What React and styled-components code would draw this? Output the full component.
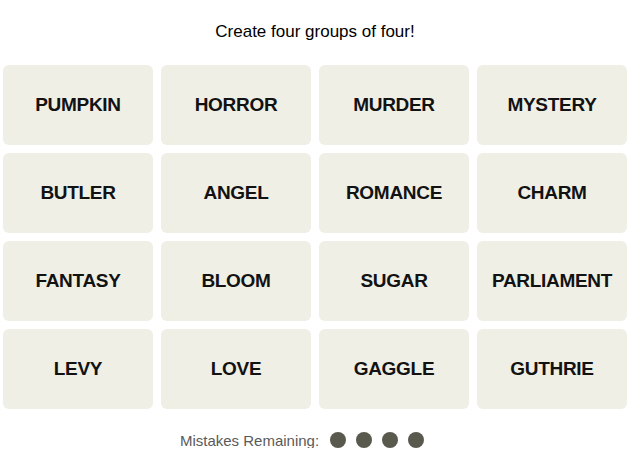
import React from 'react';
import styled, { createGlobalStyle } from 'styled-components';

const GlobalStyle = createGlobalStyle`
  body {
    margin: 0;
    background: #ffffff;
    font-family: "Liberation Sans", Arial, sans-serif;
  }
`;

const words = [
  'PUMPKIN', 'HORROR', 'MURDER', 'MYSTERY',
  'BUTLER', 'ANGEL', 'ROMANCE', 'CHARM',
  'FANTASY', 'BLOOM', 'SUGAR', 'PARLIAMENT',
  'LEVY', 'LOVE', 'GAGGLE', 'GUTHRIE',
];

function App() {
  return (
    <Page>
      <GlobalStyle />
      <Title>Create four groups of four!</Title>
      <Board>
        {words.map((w) => (
          <Tile key={w}>{w}</Tile>
        ))}
      </Board>
      <Mistakes>
        <MistakesLabel>Mistakes Remaining:</MistakesLabel>
        <Dots>
          {[0, 1, 2, 3].map((i) => (
            <Dot key={i} />
          ))}
        </Dots>
      </Mistakes>
    </Page>
  );
}

export default App;

const Page = styled.div`
  width: 630px;
  padding: 0 3px;
  box-sizing: border-box;
  display: flex;
  flex-direction: column;
  align-items: center;
`;

const Title = styled.div`
  margin-top: 22px;
  height: 20px;
  line-height: 20px;
  font-size: 17px;
  color: #000;
`;

const Board = styled.div`
  margin-top: 23px;
  width: 100%;
  display: grid;
  grid-template-columns: repeat(4, 150px);
  grid-auto-rows: 80px;
  gap: 8px;
`;

const Tile = styled.div`
  background: #efefe6;
  border-radius: 6px;
  display: flex;
  align-items: center;
  justify-content: center;
  font-size: 19px;
  font-weight: 700;
  letter-spacing: -0.3px;
  color: #121212;
`;

const Mistakes = styled.div`
  margin-top: 23px;
  margin-right: 26px;
  display: flex;
  align-items: center;
  gap: 11px;
  height: 16px;
`;

const MistakesLabel = styled.span`
  font-size: 15px;
  color: #5a5a5a;
`;

const Dots = styled.div`
  display: flex;
  gap: 10px;
`;

const Dot = styled.span`
  width: 16px;
  height: 16px;
  border-radius: 50%;
  background: #5a594e;
`;
